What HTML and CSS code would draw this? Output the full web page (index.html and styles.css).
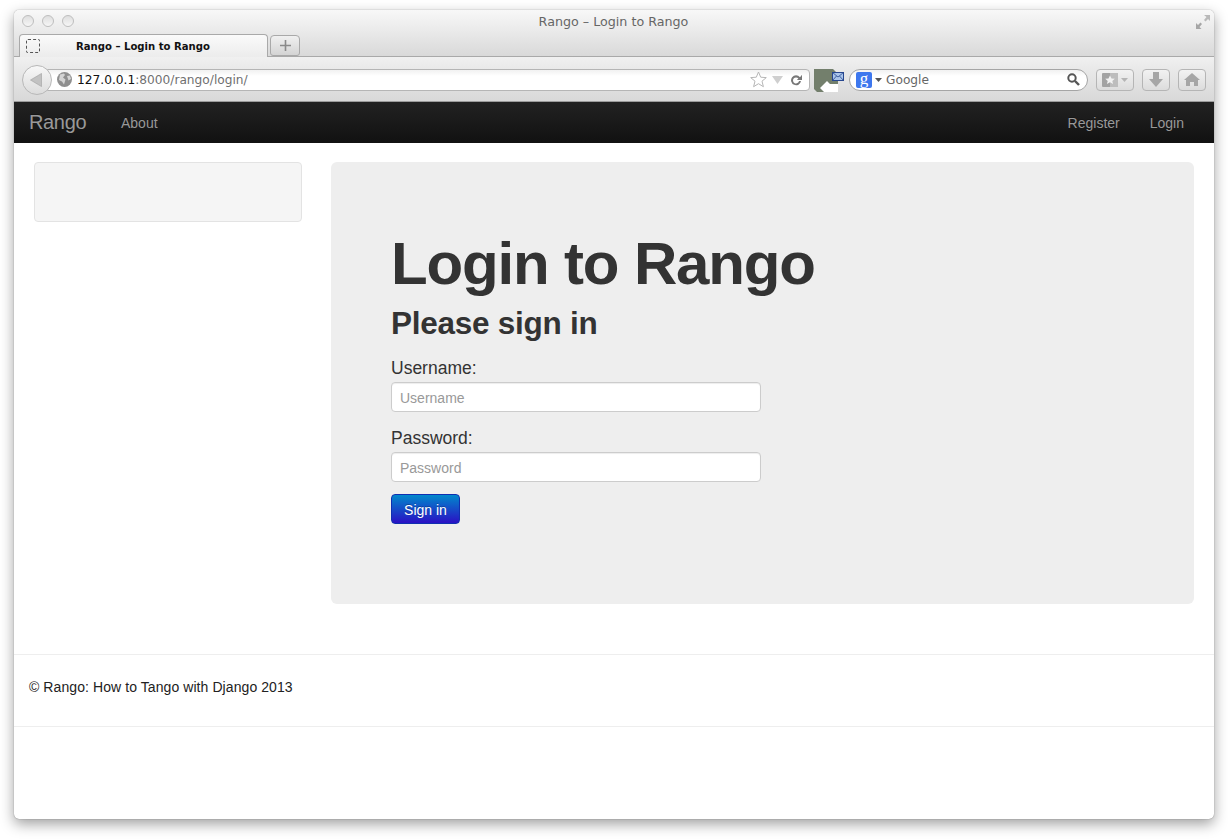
FILE: index.html
```html
<!doctype html>
<html>
<head>
	<meta http-equiv="Content-Type" content="text/html; charset=utf-8" />
	<title>Rango - Login to Rango</title>
	<link rel="stylesheet" href="styles.css">
</head>
<body>
<div class="window">
	<div class="chrome-top">
		<div class="titlerow">
			<div class="lights"><i></i><i></i><i></i></div>
			<div class="wintitle">Rango – Login to Rango</div>
			<svg class="fullscreen" width="16" height="16" viewBox="0 0 16 16"><path d="M9 1h6v6l-2-2-2.500 2.500-1.500-1.500L11.500 3z" fill="#b9b9b9"/><path d="M1 15V9l2 2 2.500-2.500 1.500 1.500L4.500 13l2 2z" fill="#a6a6a6"/></svg>
		</div>
		<div class="tabrow">
			<div class="tab">
				<span class="tab-favicon"></span>
				<span class="tab-label">Rango – Login to Rango</span>
			</div>
			<div class="newtab">
				<svg width="11" height="11" viewBox="0 0 11 11"><path d="M4.700 0h1.600v4.700H11v1.600H6.300V11H4.700V6.300H0V4.700h4.700z" fill="#8a8a8a"/></svg>
			</div>
		</div>
	</div>
	<div class="toolbar">
		<div class="backbtn">
			<svg width="12" height="14" viewBox="0 0 12 14"><path d="M11.500 .5v13L.5 7z" fill="#c2c2c2" stroke="#a8a8a8" stroke-width=".7"/></svg>
		</div>
		<div class="urlfield">
			<svg class="globe" width="15" height="15" viewBox="0 0 15 15"><circle cx="7.500" cy="7.500" r="7.500" fill="#8f8f8f"/><path d="M3 2.500l4-1 1 1.500-2 2.500 2.500 2-1.500 5-2-3-3-1.500zM10 4l3-.5 1 3.500-2.500 1.500z" fill="#d4d4d4"/></svg>
			<span class="url"><b>127.0.0.1</b>:8000/rango/login/</span>
			<svg class="star" width="17" height="17" viewBox="0 0 17 17"><path d="M8.500 1l2.200 5.200 5.600.4-4.300 3.600 1.400 5.500-4.900-3-4.900 3 1.400-5.500L.7 6.600l5.600-.4z" fill="#fff" stroke="#b5b5b5"/></svg>
			<svg class="dropmark" width="11" height="8" viewBox="0 0 11 8"><path d="M0 0h11L5.500 8z" fill="#cfcfcf"/></svg>
			<svg class="reload" width="12" height="12" viewBox="0 0 12 12"><path d="M10 3.200A5 5 0 1 0 11 7H9a3 3 0 1 1-.6-2.400L6.800 6H12V.8z" fill="#777"/></svg>
		</div>
		<svg class="feed" width="30" height="24" viewBox="0 0 30 24">
			<path d="M0 1h19l5 5v18H3l-3-3z" fill="#737f6c"/>
			<path d="M6 20l7-7 3 3h8v8H10z" fill="#fff"/>
			<rect x="18.500" y="4.500" width="11" height="8" fill="#a9c4ea" stroke="#27478f"/>
			<path d="M18.500 4.500l5.500 4.500 5.500-4.500M18.500 12.500l4-4.500M29.500 12.500l-4-4.500" fill="none" stroke="#27478f" stroke-width=".8"/>
		</svg>
		<div class="searchfield">
			<span class="g-badge">g</span>
			<svg class="g-arrow" width="7" height="4" viewBox="0 0 7 4"><path d="M0 0h7L3.500 4z" fill="#555"/></svg>
			<span class="search-text">Google</span>
			<svg class="lens" width="13" height="13" viewBox="0 0 13 13"><circle cx="5" cy="5" r="3.700" fill="none" stroke="#555" stroke-width="2"/><path d="M8 8l4 4" stroke="#555" stroke-width="2.400"/></svg>
		</div>
		<div class="toolbtn toolbtn-book">
			<svg width="16" height="14" viewBox="0 0 16 14"><rect width="16" height="14" rx="1" fill="#a3a3a3"/><rect x="8" width="8" height="14" fill="#bdbdbd"/><path d="M8 2.500l1.500 3 3.300.3-2.500 2.100.8 3.200L8 9.300l-3.100 1.800.8-3.200-2.500-2.100 3.300-.3z" fill="#f2f2f2"/></svg>
			<svg width="7" height="4" viewBox="0 0 7 4"><path d="M0 0h7L3.500 4z" fill="#b5b5b5"/></svg>
		</div>
		<div class="toolbtn toolbtn-small">
			<svg width="14" height="15" viewBox="0 0 14 15"><path d="M4 0h6v7h4l-7 8-7-8h4z" fill="#a6a6a6"/></svg>
		</div>
		<div class="toolbtn toolbtn-small">
			<svg width="16" height="13" viewBox="0 0 16 13"><path d="M8 0l8 7h-2v6H10V9H6v4H2V7H0z" fill="#a6a6a6"/></svg>
		</div>
	</div>
	<div class="navbar">
		<a class="brand">Rango</a>
		<a class="navlink">About</a>
		<div class="nav-right">
			<a class="navlink">Register</a>
			<a class="navlink">Login</a>
		</div>
	</div>
	<div class="page">
		<div class="sidebar"></div>
		<div class="hero">
			<h1>Login to Rango</h1>
			<h2>Please sign in</h2>
			<form class="signin">
				<label for="username">Username:</label>
				<input id="username" type="text" placeholder="Username">
				<label for="password">Password:</label>
				<input id="password" type="password" placeholder="Password">
				<button type="button">Sign in</button>
			</form>
		</div>
	</div>
	<div class="footer">© Rango: How to Tango with Django 2013</div>
</div>
</body>
</html>
```

FILE: styles.css
```css
html,body{margin:0;padding:0;background:#fff;}
body{padding:10px 14px 0;height:829px;overflow:hidden;font-family:"Liberation Sans",Arial,sans-serif;color:#333;}
.window{width:1200px;height:809px;background:#fff;border-radius:5px;overflow:hidden;box-shadow:0 0 1px rgba(0,0,0,.55),0 5px 14px rgba(0,0,0,.38);display:flex;flex-direction:column;}

.chrome-top{height:47px;box-sizing:border-box;border-bottom:1px solid #a9a9a9;background:linear-gradient(#f8f8f8,#d9d9d9);}
.titlerow{height:24px;position:relative;display:flex;align-items:center;justify-content:center;}
.lights{position:absolute;left:8px;top:5px;display:flex;gap:8px;}
.lights i{display:block;width:10px;height:10px;border:1px solid #bdbdbd;border-radius:50%;background:linear-gradient(#dedede,#f6f6f6);}
.wintitle{font:12.700px "DejaVu Sans",sans-serif;color:#666;margin-left:-1px;margin-top:-1px;}
.fullscreen{position:absolute;right:3px;top:4px;}
.tabrow{height:22px;display:flex;padding-left:5px;gap:2px;}
.tab{width:249px;height:23px;box-sizing:border-box;border:1px solid #a9a9a9;border-bottom:0;border-radius:4px 4px 0 0;background:linear-gradient(#fafafa,#ececec);display:flex;align-items:center;z-index:1;}
.tab-favicon{width:12px;height:12px;margin-left:6px;border:1px dashed #555;border-radius:2px;flex:none;}
.tab-label{margin-left:36px;font:bold 10.100px "DejaVu Sans",sans-serif;color:#111;}
.newtab{width:30px;height:21px;margin-top:1px;box-sizing:border-box;border:1px solid #a9a9a9;border-radius:4px 4px 3px 3px;background:linear-gradient(#f0f0f0,#d4d4d4);display:flex;align-items:center;justify-content:center;}

.toolbar{height:45px;box-sizing:border-box;border-bottom:1px solid #9c9c9c;background:linear-gradient(#f0f0f0,#d8d8d8);display:flex;align-items:center;padding:1px 8px 0;}
.backbtn{width:28px;height:28px;border:1px solid #b8b8b8;border-radius:50%;background:linear-gradient(#f8f8f8,#dcdcdc);display:flex;align-items:center;justify-content:center;z-index:1;flex:none;}
.backbtn svg{margin-left:-2px;}
.urlfield{width:763px;height:22px;box-sizing:border-box;margin-left:-5px;border:1px solid #b5b5b5;border-radius:0 4px 4px 0;background:linear-gradient(#f1f1f1,#fff 30%);display:flex;align-items:center;flex:none;padding:0 7px 0 9px;}
.globe{flex:none;}
.url{margin-left:5px;padding-top:1px;font:12.200px "DejaVu Sans",sans-serif;color:#6f6f6f;flex:1;}
.url b{font-weight:normal;color:#111;}
.star{flex:none;margin-right:5px;}
.dropmark{flex:none;margin-right:7px;}
.reload{flex:none;}
.feed{flex:none;margin-left:4px;}
.searchfield{width:239px;height:22px;box-sizing:border-box;margin-left:5px;border:1px solid #a5a5a5;border-radius:11px;background:linear-gradient(#f1f1f1,#fff 30%);display:flex;align-items:center;flex:none;padding:0 7px 0 6px;}
.g-badge{width:16px;height:16px;border-radius:2px;background:#3d77ee;color:#fff;font:17px/13px "Liberation Serif",serif;text-align:center;}
.g-arrow{margin-left:3px;}
.search-text{margin-left:4px;padding-top:1px;flex:1;font:12.200px "DejaVu Sans",sans-serif;color:#666;}
.toolbtn{height:22px;box-sizing:border-box;border:1px solid #b5b5b5;border-radius:4px;background:linear-gradient(#f2f2f2,#dcdcdc);display:flex;align-items:center;justify-content:center;flex:none;}
.toolbtn-book{width:38px;margin-left:8px;gap:3px;}
.toolbtn-small{width:28px;margin-left:8px;}

.navbar{height:41px;flex:none;background:linear-gradient(#222,#111);display:flex;align-items:center;padding:0 30px 0 15px;font-size:14px;}
.navbar a{color:#999;text-shadow:0 -1px 0 rgba(0,0,0,.25);}
.brand{font-size:20px;font-weight:200;letter-spacing:-.35px;width:92px;}
.nav-right{margin-left:auto;display:flex;gap:30px;}

.page{display:flex;padding:19px 20px 50px;gap:29px;align-items:flex-start;}
.sidebar{width:268px;height:60px;box-sizing:border-box;flex:none;background:#f5f5f5;border:1px solid #e3e3e3;border-radius:4px;}
.hero{flex:1;height:442px;box-sizing:border-box;padding:60px;background:#eee;border-radius:6px;}
h1{margin:0;font-size:60px;line-height:84px;letter-spacing:-1.150px;font-weight:bold;}
h2{margin:0 0 18px;font-size:31.500px;line-height:34px;letter-spacing:-.25px;font-weight:bold;}
.signin label{display:block;font-size:17.500px;line-height:20px;color:#333;margin-bottom:4px;}
.signin input{display:block;width:370px;height:30px;box-sizing:border-box;padding:5px 8px 3px;margin:0 0 16px;border:1px solid #ccc;border-radius:4px;background:#fff;font:14px "Liberation Sans",Arial,sans-serif;box-shadow:inset 0 1px 1px rgba(0,0,0,.075);}
.signin input::placeholder{color:#999;}
.signin button{display:block;width:69px;height:30px;margin-top:-4px;padding:2px 0 0;border:1px solid #0f2fb0;border-radius:4px;background:linear-gradient(#0088cc,#2a10c4);color:#fff;font:14px "Liberation Sans",Arial,sans-serif;text-shadow:0 -1px 0 rgba(0,0,0,.25);}

.footer{height:73px;box-sizing:border-box;border-top:1px solid #eee;border-bottom:1px solid #eee;padding:0 15px 8px;display:flex;align-items:center;font-size:14px;letter-spacing:.08px;color:#222;}
```
